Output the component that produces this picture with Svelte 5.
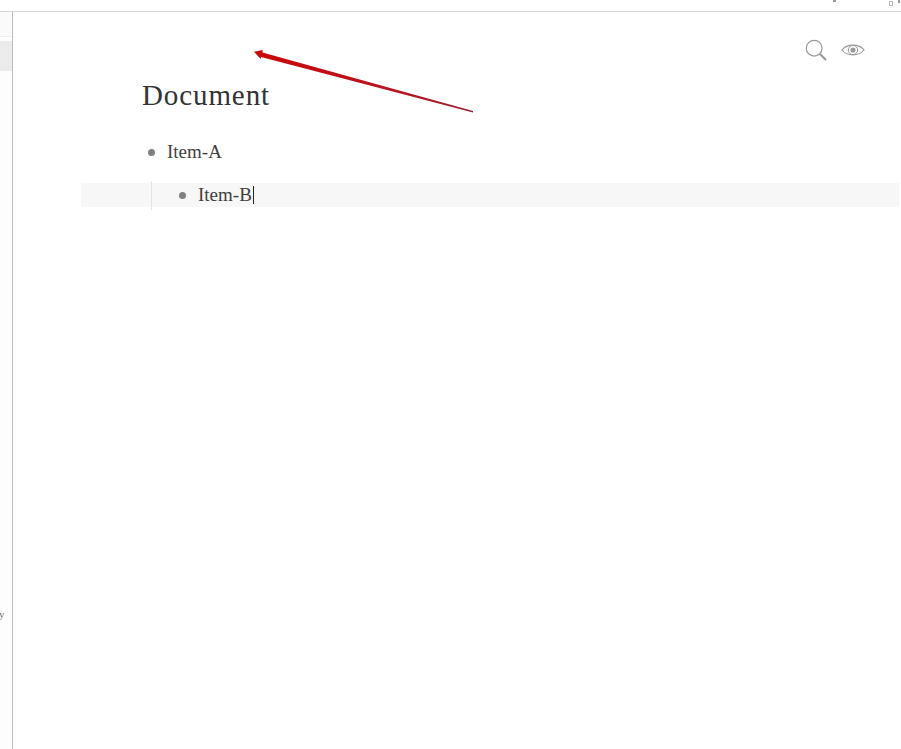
<script>
  let items = ["Item-A"];
</script>

<div class="window">
  <div class="topbar">
    <span class="mark one"></span>
    <span class="mark two"></span>
    <span class="mark three"></span>
  </div>
  <div class="body">
    <aside class="sidebar">
      <div class="row-top"></div>
      <div class="row-active"></div>
      <span class="tick">y</span>
    </aside>
    <main class="page">
      <div class="tools">
        <svg width="22" height="22" viewBox="0 0 24 24" fill="none" stroke="#9c9c9c">
          <circle cx="10" cy="10" r="8.6" stroke-width="1.3" />
          <path d="M16 16 L23 23" stroke-width="2.4" />
        </svg>
        <svg width="24" height="16" viewBox="0 0 24 16" fill="none" stroke="#9a9a9a">
          <path d="M1 8 C6 1.5 18 1.5 23 8 C18 14.5 6 14.5 1 8 Z" stroke-width="1.2" />
          <circle cx="12" cy="8" r="4.6" stroke-width="1" />
          <circle cx="12" cy="8" r="2.6" fill="#9a9a9a" stroke="none" />
        </svg>
      </div>
      <h1>Document</h1>
      {#each items as item}
        <div class="item first"><span class="bullet"></span>{item}</div>
      {/each}
      <div class="current">
        <div class="guide"></div>
        <div class="item nested"><span class="bullet"></span>Item-B<span class="caret"></span></div>
      </div>
    </main>
  </div>
  <svg class="arrow" width="230" height="70" viewBox="0 0 230 70">
    <defs>
      <linearGradient id="fade" x1="0" y1="0" x2="1" y2="0">
        <stop offset="0" stop-color="#cc0808" />
        <stop offset="0.6" stop-color="#b81420" />
        <stop offset="1" stop-color="#9c1c2c" />
      </linearGradient>
    </defs>
    <path d="M3 4.7 L11.7 3 L11.5 5.5 L222 64 L222 65.4 L10 10 L9.7 12 Z" fill="url(#fade)" />
  </svg>
</div>

<style>
  :global(body) {
    background: #fff;
  }

  .window {
    position: relative;
    width: 901px;
    height: 749px;
    overflow: hidden;
    font-family: "Liberation Serif", serif;
    color: #333;
  }

  .topbar {
    position: relative;
    height: 11px;
    border-bottom: 1px solid #d6d6d6;
  }

  .mark {
    position: absolute;
    background: #999;
  }

  .mark.one {
    left: 833px;
    top: 0;
    width: 3px;
    height: 2px;
  }

  .mark.two {
    left: 889px;
    top: 1px;
    width: 4px;
    height: 5px;
    background: none;
    border: 1px solid #bbb;
    box-sizing: border-box;
  }

  .mark.three {
    left: 898px;
    top: 0;
    width: 2px;
    height: 3px;
  }

  .body {
    display: flex;
    height: 737px;
  }

  .sidebar {
    position: relative;
    width: 12px;
    flex: none;
    background: #fdfdfd;
    border-right: 1px solid #bdbdbd;
  }

  .row-top {
    height: 24px;
    background: #fafafa;
    border-bottom: 1px solid #eee;
  }

  .row-active {
    margin-top: 4px;
    height: 30px;
    background: #ececec;
  }

  .tick {
    position: absolute;
    left: -1px;
    top: 596px;
    font-size: 11px;
    color: #777;
  }

  .page {
    flex: 1;
    min-width: 0;
  }

  .tools {
    display: flex;
    justify-content: flex-end;
    align-items: center;
    gap: 14px;
    height: 24px;
    padding: 26px 36px 0 0;
  }

  h1 {
    margin: 14px 0 0 129px;
    font-size: 29px;
    line-height: 38px;
    font-weight: 400;
    letter-spacing: 0.9px;
    color: #333;
  }

  .item {
    display: flex;
    align-items: center;
    font-size: 19px;
    line-height: 24px;
    color: #3f3f3f;
  }

  .first {
    margin: 26px 0 0 135px;
  }

  .bullet {
    width: 7px;
    height: 7px;
    margin-right: 12px;
    border-radius: 50%;
    background: #808080;
  }

  .current {
    position: relative;
    margin: 19px 0 0 68px;
    background: #f7f7f7;
    height: 24px;
    width: 818px;
  }

  .guide {
    position: absolute;
    left: 70px;
    top: -2px;
    height: 29px;
    width: 1px;
    background: #e4e4e4;
  }

  .nested {
    padding-left: 98px;
  }

  .caret {
    width: 1px;
    height: 18px;
    margin-left: 1px;
    background: #222;
  }

  .arrow {
    position: absolute;
    left: 251px;
    top: 47px;
  }
</style>
